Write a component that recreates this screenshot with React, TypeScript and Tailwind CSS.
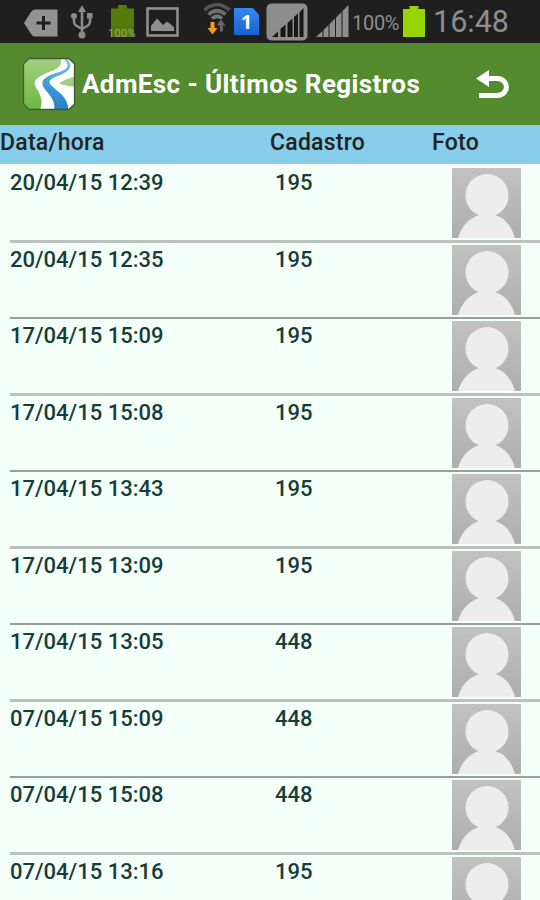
type Registro = {
  data: string;
  cadastro: string;
};

const registros: Registro[] = [
  { data: "20/04/15 12:39", cadastro: "195" },
  { data: "20/04/15 12:35", cadastro: "195" },
  { data: "17/04/15 15:09", cadastro: "195" },
  { data: "17/04/15 15:08", cadastro: "195" },
  { data: "17/04/15 13:43", cadastro: "195" },
  { data: "17/04/15 13:09", cadastro: "195" },
  { data: "17/04/15 13:05", cadastro: "448" },
  { data: "07/04/15 15:09", cadastro: "448" },
  { data: "07/04/15 15:08", cadastro: "448" },
  { data: "07/04/15 13:16", cadastro: "195" },
];

const StatusBar = () => (
  <div className="flex h-[43px] shrink-0 items-start bg-[#1f1f1f] text-[#8e8e8e]">
    {/* Tag with plus */}
    <svg className="mt-[9px] ml-6 shrink-0" width="34" height="28" viewBox="0 0 34 28">
      <path d="M0 14 L7 3 Q8.500 .5 11 .5 H33.500 V27.500 H11 Q8.500 27.500 7 25 Z" fill="#929292" />
      <path d="M19.500 7 V21 M12.500 14 H26.500" stroke="#1f1f1f" strokeWidth="3" />
    </svg>

    {/* USB */}
    <svg className="mt-[5px] ml-[13px] shrink-0" width="22" height="34" viewBox="0 0 22 34" fill="none" stroke="#8b8b8b" strokeWidth="2.600">
      <path d="M11 4 V30 M11 24 L5 20.500 Q3 19 3 16.500 V11 M11 24 L17 20.500 Q19 19 19 16.500 V12" />
      <path d="M11 0 L15 7 H7 Z" fill="#8b8b8b" stroke="none" />
      <circle cx="11" cy="30" r="3.500" fill="#8b8b8b" stroke="none" />
      <circle cx="3" cy="11" r="3" fill="#8b8b8b" stroke="none" />
      <rect x="16" y="8" width="5.500" height="5.500" fill="#8b8b8b" stroke="none" />
    </svg>

    {/* Dim battery */}
    <div className="relative mt-[5px] ml-[15px] h-[34px] w-7 shrink-0">
      <svg className="ml-[3px]" width="23" height="32" viewBox="0 0 23 32">
        <path d="M0 3.500 H7 V0 H16 V3.500 H23 V32 H0 Z" fill="#557b0b" />
      </svg>
      <span className="absolute top-[23px] left-0 font-[Roboto] text-[11px] leading-[11px] tracking-[0.3px] text-[#93a17a]">100%</span>
    </div>

    {/* Picture */}
    <svg className="mt-[7px] ml-[10px] shrink-0" width="33" height="30" viewBox="0 0 33 30">
      <rect x="1.500" y="1.500" width="30" height="27" fill="none" stroke="#8e8e8e" strokeWidth="2.600" />
      <path d="M5 24 V19 L11 11.500 L17 18 L21 14.500 L28 20 V24 Z" fill="#8e8e8e" />
    </svg>

    {/* Wifi with transfer arrows */}
    <svg className="mt-[3px] ml-[24px] shrink-0" width="28" height="33" viewBox="0 0 28 33" fill="none">
      <path d="M1.500 7 Q14 -3.500 26.500 7" stroke="#555" strokeWidth="3.600" />
      <path d="M5.500 11.500 Q14 4 22.500 11.500" stroke="#6e6e6e" strokeWidth="3.600" />
      <path d="M9 15.500 Q14 11 19 15.500" stroke="#777" strokeWidth="3.600" />
      <path d="M7.500 19 H11.500 V25 H14.500 L9.500 31.500 L4.500 25 H7.500 Z" fill="#f39b20" />
      <path d="M16.800 28.500 V22.500 H13.500 L18 16.500 L22.500 22.500 H20 V28.500 Z" fill="#666" />
    </svg>

    {/* SIM 1 */}
    <div className="mt-[8px] ml-[3px] grid h-[27px] w-[25px] shrink-0 place-items-center bg-linear-to-b from-[#3488f2] to-[#1762d4] font-['Open_Sans'] text-[20px] leading-none font-bold text-white [clip-path:polygon(0_0,75%_0,100%_25%,100%_100%,0_100%)]">
      1
    </div>

    {/* Signal bars */}
    <svg className="mt-[3px] ml-[7px] shrink-0" width="42" height="38" viewBox="0 0 42 38">
      <rect x=".5" y=".5" width="41" height="37" rx="5" fill="#8d8d8d" />
      <path d="M6 34 L12 28.500 V34 Z M14.500 34 V26 L19.500 21.500 V34 Z M21.500 34 V20 L26.500 15.500 V34 Z M28 34 V14 L32 10.500 V34 Z M33.500 34 V9.500 L37.500 5 V34 Z" fill="#171717" />
    </svg>
    <svg className="mt-[5px] ml-2 shrink-0" width="34" height="32" viewBox="0 0 34 32">
      <path d="M0 32 L6.500 26 V32 Z M7.500 32 V25 L12.500 20 V32 Z M13.500 32 V19 L19 13.500 V32 Z M20 32 V12.500 L25.500 7 V32 Z M26.500 32 V6 L32.500 0 V32 Z" fill="#8d8d8d" />
    </svg>

    <span className="mt-3 ml-[2px] w-[49px] shrink-0 font-[Roboto] text-[20px] leading-[22px] tracking-[-0.3px]">100%</span>
    <svg className="mt-[6px] ml-[2px] shrink-0" width="22" height="32" viewBox="0 0 22 32">
      <path d="M0 3 H6.500 V0 H15.500 V3 H22 V31 H0 Z" fill="#98d500" />
    </svg>
    <span className="mt-[5px] ml-[8px] shrink-0 font-[Roboto] text-[30.5px] leading-[34px] whitespace-nowrap">16:48</span>
  </div>
);

const Logo = () => (
  <svg className="ml-[22px] shrink-0" width="54" height="54" viewBox="0 0 54 54">
    <defs>
      <linearGradient id="logoGreen" x1="0" y1="0" x2="0" y2="1">
        <stop offset="0" stopColor="#a5cf88" />
        <stop offset="1" stopColor="#6bb83b" />
      </linearGradient>
      <linearGradient id="logoRiver" x1="0" y1="0" x2="0" y2="1">
        <stop offset="0" stopColor="#8fcdf0" />
        <stop offset=".45" stopColor="#3fa0d9" />
        <stop offset="1" stopColor="#2b7dbd" />
      </linearGradient>
      <clipPath id="logoClip">
        <path d="M7 1.500 H47 L52.500 7 V47 L47 52.500 H7 L1.500 47 V7 Z" />
      </clipPath>
    </defs>
    <g clipPath="url(#logoClip)">
      <rect width="54" height="54" fill="#fff" />
      <path d="M0 0 H38 C42 9 35 12 27 15 C15 20 9 24 15 32 C19 39 22 46 17 54 H0 Z" fill="url(#logoGreen)" />
      <path d="M54 19 C48 21 42 23 37 26 C42 29 48 29 54 30 Z" fill="#a3cf87" />
      <path d="M49 0 H54 V12 C52 8 50 5 49 0 Z" fill="#c9e3b9" />
      <path d="M40 0 C49 8 46 12 37 15 C24 19 17 23 22 31 C28 39 34 44 32 54 H46 C47 42 39 37 31 30 C24 24 28 22 38 18 C50 13 51 8 44 0 Z" fill="url(#logoRiver)" />
    </g>
    <path d="M7 1.500 H47 L52.500 7 V47 L47 52.500 H7 L1.500 47 V7 Z" fill="none" stroke="#3c5f2c" strokeWidth="1.300" />
  </svg>
);

const Avatar = () => (
  <svg className="shrink-0" width="69" height="70" viewBox="0 0 69 70">
    <defs>
      <linearGradient id="avatarBg" x1="0" y1="0" x2="0" y2="1">
        <stop offset="0" stopColor="#c2c2c2" />
        <stop offset="1" stopColor="#aeaeae" />
      </linearGradient>
    </defs>
    <rect width="69" height="70" fill="url(#avatarBg)" />
    <circle cx="35" cy="27.500" r="21.500" fill="#ededed" />
    <path d="M6 70 C9 60 15 51 27 47 H43 C55 51 60 60 63 70 Z" fill="#ededed" />
  </svg>
);

export default function App() {
  return (
    <div className="flex h-[900px] w-[540px] flex-col overflow-hidden bg-[#f5fffa] font-[Roboto,sans-serif]">
      <StatusBar />

      {/* Action bar */}
      <header className="flex h-[82px] shrink-0 items-center bg-[#558b2f] text-white">
        <Logo />
        <h1 className="ml-[6px] w-[345px] text-[26px] font-bold tracking-[0.4px] whitespace-nowrap">AdmEsc - Últimos Registros</h1>
        <svg className="ml-[49px] shrink-0" width="34" height="29" viewBox="0 0 34 29">
          <path d="M0 8.500 L13 0 V17 Z" fill="#fff" />
          <path d="M11 8.500 H21 C33.500 8.500 33.500 25.500 21 25.500 H3" fill="none" stroke="#fff" strokeWidth="5" />
        </svg>
      </header>

      {/* Column titles */}
      <div className="flex h-[39px] shrink-0 bg-[#87ceeb] pt-1 text-[23px] leading-[28px] font-medium tracking-[0.25px] text-[#222]">
        <span className="w-[270px]">Data/hora</span>
        <span className="w-[162px]">Cadastro</span>
        <span>Foto</span>
      </div>

      <ul className="flex flex-col pt-[2px]">
        {registros.map((r) => (
          <li
            key={r.data}
            className="ml-[10px] flex shrink-0 pt-[2px] text-[22px] font-medium text-[#173d38] odd:h-[77px] odd:border-b-3 odd:border-[#bbc2be] even:h-[76px] even:border-b-2 even:border-[#979f9b]"
          >
            <span className="w-[265px] pt-[1px] leading-[28px]">{r.data}</span>
            <span className="w-[177px] pt-[1px] leading-[28px]">{r.cadastro}</span>
            <Avatar />
          </li>
        ))}
      </ul>
    </div>
  );
}
